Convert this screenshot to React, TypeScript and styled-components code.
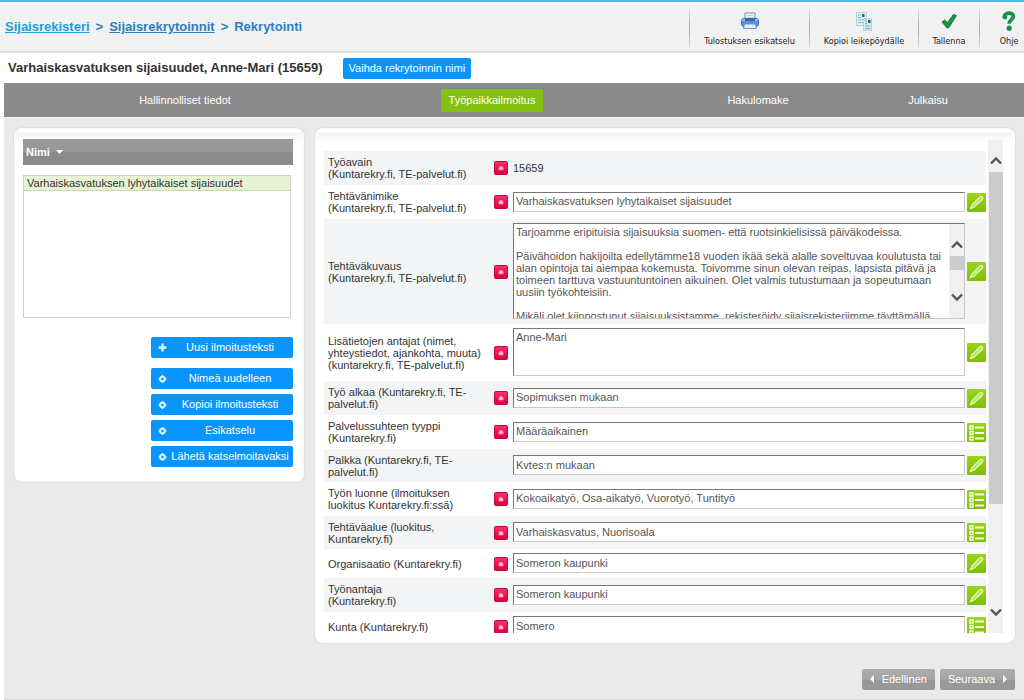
import React from "react";
import styled, { createGlobalStyle, css } from "styled-components";

const GlobalStyle = createGlobalStyle`
  *, *::before, *::after { box-sizing: border-box; }
  body {
    margin: 0;
    background: #fff;
    color: #333;
    font: 11px/12px "Liberation Sans", Arial, sans-serif;
  }
  button, input, textarea { font: inherit; color: inherit; margin: 0; }
  svg { flex-shrink: 0; }
`;

const Page = styled.div`
  border-top: 2px solid #4bb8ec;
  padding-top: 2px;
  overflow: hidden;
`;

const Header = styled.header`
  display: flex;
  justify-content: space-between;
  height: 49px;
  background: #f1f1f1;
  border-bottom: 2px solid #dedede;
`;

const Breadcrumb = styled.nav`
  display: flex;
  align-items: center;
  gap: 6px;
  padding: 0 0 1px 5px;
  font-size: 13px;
  line-height: 16px;
  font-weight: bold;
  color: #2b7fc1;
  white-space: nowrap;
`;

const Crumb = styled.a<{ $bright?: boolean }>`
  color: ${(p) => (p.$bright ? "#1c9fe0" : "#2b7fc1")};
`;

const Toolbar = styled.div`
  display: flex;
  margin-right: -14px;
  padding-top: 4px;
`;

const ToolButton = styled.button<{ $width: number }>`
  display: flex;
  flex-direction: column;
  align-items: center;
  gap: 4px;
  width: ${(p) => p.$width}px;
  height: 40px;
  padding: 3px 0 0;
  border: 0;
  border-left: 1px solid;
  border-image: linear-gradient(#e6e6e6, #a8a8a8 50%, #e0e0e0) 1;
  background: none;
  color: #222;
  font: 9px/12px "DejaVu Sans Condensed", "DejaVu Sans", sans-serif;
  white-space: nowrap;
`;

const TitleBar = styled.div`
  display: flex;
  align-items: center;
  gap: 20px;
  height: 30px;
  padding-left: 8px;
`;

const Title = styled.h1`
  margin: 0;
  font-size: 13px;
  line-height: 16px;
  white-space: nowrap;
`;

const BlueButton = styled.button`
  height: 21px;
  padding: 0 6px 1px;
  border: 0;
  border-radius: 2px;
  background: #0a95fc;
  color: #fff;
  white-space: nowrap;
`;

const Tabs = styled.nav`
  display: grid;
  grid-template-columns: 362fr 252fr 280fr 60fr 66fr;
  align-items: center;
  justify-items: center;
  height: 34px;
  margin-left: 4px;
  background: #8a8a8a;
`;

const Tab = styled.a<{ $active?: boolean }>`
  padding: 5px 8px 6px;
  border-radius: 1px;
  color: #fff;
  text-decoration: none;
  white-space: nowrap;
  ${(p) => p.$active && css`background: #85c111;`}
`;

const Main = styled.main`
  margin-left: 4px;
  padding: 10px 9px 9px 10px;
  border-top: 1px solid #f4f4f4;
  border-bottom: 1px solid #dcdcdc;
  background: #eaeaea;
`;

const Columns = styled.div`
  display: flex;
  align-items: flex-start;
  gap: 11px;
`;

const Panel = styled.section`
  padding: 10px 10px 10px 8px;
  border: 1px solid #fbfbfb;
  border-radius: 8px;
  background: linear-gradient(#fff 0, #fff 3px, #f5f5f5 4px, #fff 14px);
  box-shadow: 0 0 1px 1px #dfdfdf;
`;

const SidePanel = styled(Panel)`
  flex: 0 0 290px;
  padding-bottom: 14px;
`;

const FormPanel = styled(Panel)`
  flex: 1;
  min-width: 0;
  display: flex;
  gap: 2px;
  padding: 11px 11px 9px 8px;
`;

const ListHeader = styled.button`
  display: flex;
  align-items: center;
  gap: 6px;
  width: 100%;
  height: 26px;
  padding: 0 3px;
  border: 0;
  background: linear-gradient(#9b9b9b 0, #979797 50%, #8b8b8b 51%, #898989 100%);
  color: #fff;
  font-weight: bold;
`;

const NameList = styled.ul`
  height: 143px;
  margin: 10px 2px 19px 0;
  padding: 0;
  border: 1px solid #ccd0d0;
  list-style: none;
`;

const NameItem = styled.li`
  padding: 1px 3px;
  border-bottom: 1px solid #c9d8b4;
  background: #e7f2d2;
`;

const Actions = styled.div`
  display: flex;
  flex-direction: column;
  gap: 5px;
  width: 142px;
  margin-left: auto;
`;

const ActionButton = styled(BlueButton)<{ $first?: boolean }>`
  display: flex;
  align-items: center;
  gap: 3px;
  padding: 0 3px 0 7px;
  margin-bottom: ${(p) => (p.$first ? 5 : 0)}px;
`;

const ActionText = styled.span`
  flex: 1;
  padding-bottom: 1px;
  text-align: center;
`;

const FormRows = styled.form`
  flex: 1;
  min-width: 0;
  height: 493px;
  padding-top: 11px;
  overflow: hidden;
`;

const Label = styled.label<{ $compact?: boolean }>`
  padding: 5px 0 ${(p) => (p.$compact ? 4 : 5)}px 4px;
`;

const Row = styled.div`
  display: grid;
  grid-template-columns: 160px 27px 1fr 19px;
  align-items: center;
  column-gap: 1px;
  &:nth-child(odd) { background: #f3f4f6; }
`;

const Mark = styled.span`
  display: flex;
  padding-left: 9px;
`;

const fieldBox = css`
  width: 100%;
  border: 1px solid #c8c8c8;
  border-top-color: #777;
  border-left-color: #777;
  background: #fff;
  color: #555;
`;

const Field = styled.div`
  display: flex;
  padding: 4px 1px 5px 0;
`;

const TextInput = styled.input`
  ${fieldBox}
  height: 20px;
  padding: 0 2px 1px;
  outline: 0;
`;

const AreaBox = styled.div<{ $height: number }>`
  ${fieldBox}
  display: flex;
  height: ${(p) => p.$height}px;
`;

const Area = styled.textarea`
  flex: 1;
  height: 100%;
  padding: 2px 2px 0;
  border: 0;
  outline: 0;
  resize: none;
  overflow: hidden;
  background: none;
  line-height: 12px;
`;

const EditButton = styled.button`
  display: flex;
  align-items: center;
  justify-content: center;
  width: 19px;
  height: 19px;
  padding: 0;
  border: 0;
  border-radius: 1px;
  background: linear-gradient(#98d615, #7fbe08);
`;

const ScrollTrack = styled.div<{ $top: number; $bottom: number }>`
  display: flex;
  flex-direction: column;
  align-items: center;
  flex: 0 0 15px;
  padding: ${(p) => p.$top}px 0 ${(p) => p.$bottom}px;
  background: #f0f0f0;
`;

const ScrollThumb = styled.div<{ $height: number }>`
  width: 14px;
  height: ${(p) => p.$height}px;
  margin: 7px 0 auto;
  background: #cbcbcd;
`;

const Pager = styled.div`
  display: flex;
  justify-content: flex-end;
  gap: 5px;
  margin-top: 26px;
`;

const PagerButton = styled.button`
  display: flex;
  align-items: center;
  gap: 8px;
  height: 21px;
  padding: 0 8px 1px;
  border: 0;
  border-radius: 2px;
  background: linear-gradient(#acacac, #a4a4a4 50%, #979797 51%, #999);
  color: #fff;
`;

const Arrow = ({ down }: { down?: boolean }) => (
  <svg width="12" height="9" viewBox="0 0 12 9" aria-hidden="true">
    <path d={down ? "M1 1.5 6 6.5 11 1.5" : "M1 7.5 6 2.5 11 7.5"} fill="none" stroke="#555" strokeWidth="2.4" />
  </svg>
);

const RequiredIcon = () => (
  <svg width="14" height="14" viewBox="0 0 14 14" role="img" aria-label="Pakollinen">
    <defs>
      <linearGradient id="req" x1="0" y1="0" x2="0" y2="1">
        <stop offset="0" stopColor="#f8336b" />
        <stop offset="0.5" stopColor="#ec1650" />
        <stop offset="1" stopColor="#d8023c" />
      </linearGradient>
    </defs>
    <rect x="0.5" y="0.5" width="13" height="13" rx="1" fill="url(#req)" stroke="#c4063a" />
    <path d="M5 8.8V6.6L7 5.2 9 6.600V8.800Z" fill="#ff9db8" stroke="#ffb4c8" strokeWidth="0.8" />
    <circle cx="7" cy="7.400" r="1" fill="#ffe3eb" />
  </svg>
);

const PencilIcon = () => (
  <svg width="17" height="17" viewBox="0 0 17 17" aria-hidden="true">
    <path d="M2.5 14.5 4 10.8 11.6 3.2Q13.2 1.8 14.3 2.9T13.9 5.5L6.2 13.1Z" fill="#a9dc45" stroke="#effbd0" strokeWidth="1.1" />
    <path d="M5.200 12 12.600 4.600" stroke="#e3f5b4" strokeWidth="0.8" />
  </svg>
);

const ListIcon = () => (
  <svg width="17" height="17" viewBox="0 0 17 17" aria-hidden="true" fill="none" stroke="#f7fde6">
    <path d="M2 2h3v3h-3zM2 7.500h3v3h-3zM2 13h3v3h-3z" strokeWidth="1.4" />
    <path d="M7 3.500h9M7 9h9M7 14.500h9" strokeWidth="2" />
  </svg>
);

const PlusIcon = () => (
  <svg width="9" height="9" viewBox="0 0 9 9" aria-hidden="true">
    <path d="M4.5 0.5v8M0.5 4.5h8" stroke="#d5f4ff" strokeWidth="2.4" />
  </svg>
);

const GearIcon = () => (
  <svg width="9" height="9" viewBox="0 0 9 9" aria-hidden="true">
    <circle cx="4.5" cy="5" r="2.3" fill="none" stroke="#d5f4ff" strokeWidth="2" />
    <path d="M4.5 1v1.5M4.5 7.5v1.5M0.5 5h1.5M7 5h1.5" stroke="#d5f4ff" strokeWidth="1.4" />
  </svg>
);

const PrinterIcon = () => (
  <svg width="20" height="20" viewBox="0 0 20 20" aria-hidden="true">
    <path d="M5 2h10v7H5z" fill="#eef5ff" stroke="#6f8fc4" />
    <path d="M7 4.5h6M7 6.5h6" stroke="#b5c8e6" />
    <rect x="1.5" y="7.5" width="17" height="8" rx="2.5" fill="#5f8fdc" stroke="#3f6cb8" />
    <path d="M2.5 9h15" stroke="#a9c8f5" strokeWidth="1.6" />
    <path d="M5 9h10" stroke="#2f4f8c" strokeWidth="1.6" />
    <path d="M4.5 13h11l1 4.5h-13z" fill="#e4eefc" stroke="#6d90cc" />
  </svg>
);

const CopyIcon = () => (
  <svg width="20" height="20" viewBox="0 0 20 20" aria-hidden="true">
    <rect x="2.5" y="1.5" width="10" height="13" fill="#e2f1f5" stroke="#b4d2dd" />
    <path d="M4 4h3M4 6.5h3M4 9h6M4 11.5h6" stroke="#8fbccd" />
    <rect x="8" y="3" width="2.5" height="3" fill="#2d6576" />
    <rect x="9.5" y="7.5" width="8" height="12" fill="#d3e9f0" stroke="#b4d2dd" />
    <path d="M11 10h2M11 12.500h2M11 15h5M11 17.500h5" stroke="#7fb0c4" />
    <rect x="14" y="9" width="2.500" height="3" fill="#2d6576" />
  </svg>
);

const CheckIcon = () => (
  <svg width="20" height="20" viewBox="0 0 20 20" aria-hidden="true">
    <path d="M3 11 5.500 9 8.500 11.500 14.500 3.500 17.500 4.500 10 16.500 8 17Z" fill="#159447" stroke="#0f8240" strokeLinejoin="round" />
  </svg>
);

const HelpIcon = () => (
  <svg width="20" height="20" viewBox="0 0 20 20" aria-hidden="true">
    <path d="M5.500 7C4.500 0.500 14.800 0.800 14.300 5.500 14.100 8.800 10.200 8.700 10.100 12.800" fill="none" stroke="#16934b" strokeWidth="3.800" />
    <circle cx="6" cy="6" r="2.400" fill="#16934b" />
    <circle cx="10.200" cy="17.200" r="2.600" fill="#16934b" />
  </svg>
);

const Triangle = ({ dir }: { dir: "left" | "right" | "down" }) =>
  dir === "down" ? (
    <svg width="7" height="4" viewBox="0 0 7 4" aria-hidden="true"><path d="M0 0h7L3.500 4Z" fill="#fff" /></svg>
  ) : (
    <svg width="4" height="8" viewBox="0 0 4 8" aria-hidden="true">
      <path d={dir === "left" ? "M4 0v8L0 4Z" : "M0 0v8L4 4Z"} fill="#fff" />
    </svg>
  );

const description = `Tarjoamme eripituisia sijaisuuksia suomen- että ruotsinkielisissä päiväkodeissa.

Päivähoidon hakijoilta edellytämme18 vuoden ikää sekä alalle soveltuvaa koulutusta tai alan opintoja tai aiempaa kokemusta. Toivomme sinun olevan reipas, lapsista pitävä ja toimeen tarttuva vastuuntuntoinen aikuinen. Olet valmis tutustumaan ja sopeutumaan uusiin työkohteisiin.

Mikäli olet kiinnostunut sijaisuuksistamme, rekisteröidy sijaisrekisteriimme täyttämällä`;

type RowData = {
  label: string[];
  value: string;
  required?: boolean;
  compact?: boolean;
  kind: "plain" | "input" | "area" | "scroll";
  action?: "edit" | "list";
};

const rows: RowData[] = [
  { label: ["Työavain", "(Kuntarekry.fi, TE-palvelut.fi)"], value: "15659", required: true, kind: "plain" },
  { label: ["Tehtävänimike", "(Kuntarekry.fi, TE-palvelut.fi)"], value: "Varhaiskasvatuksen lyhytaikaiset sijaisuudet", required: true, kind: "input", action: "edit" },
  { label: ["Tehtäväkuvaus", "(Kuntarekry.fi, TE-palvelut.fi)"], value: description, required: true, kind: "scroll", action: "edit" },
  { label: ["Lisätietojen antajat (nimet,", "yhteystiedot, ajankohta, muuta)", "(kuntarekry.fi, TE-palvelut.fi)"], value: "Anne-Mari", required: true, kind: "area", action: "edit" },
  { label: ["Työ alkaa (Kuntarekry.fi, TE-", "palvelut.fi)"], value: "Sopimuksen mukaan", required: true, kind: "input", action: "edit" },
  { label: ["Palvelussuhteen tyyppi", "(Kuntarekry.fi)"], value: "Määräaikainen", required: true, kind: "input", action: "list" },
  { label: ["Palkka (Kuntarekry.fi, TE-", "palvelut.fi)"], value: "Kvtes:n mukaan", compact: true, kind: "input", action: "edit" },
  { label: ["Työn luonne (ilmoituksen", "luokitus Kuntarekry.fi:ssä)"], value: "Kokoaikatyö, Osa-aikatyö, Vuorotyö, Tuntityö", required: true, kind: "input", action: "list" },
  { label: ["Tehtäväalue (luokitus,", "Kuntarekry.fi)"], value: "Varhaiskasvatus, Nuorisoala", required: true, compact: true, kind: "input", action: "list" },
  { label: ["Organisaatio (Kuntarekry.fi)"], value: "Someron kaupunki", required: true, kind: "input", action: "edit" },
  { label: ["Työnantaja", "(Kuntarekry.fi)"], value: "Someron kaupunki", required: true, kind: "input", action: "edit" },
  { label: ["Kunta (Kuntarekry.fi)"], value: "Somero", required: true, kind: "input", action: "list" },
];

const FormRow = ({ row, id }: { row: RowData; id: string }) => (
  <Row>
    <Label
      as={row.kind === "plain" ? "span" : "label"}
      htmlFor={row.kind === "plain" ? undefined : id}
      $compact={row.compact}
    >
      {row.label.map((line, i) => (
        <React.Fragment key={line}>{i > 0 && <br />}{line}</React.Fragment>
      ))}
    </Label>
    <Mark>{row.required && <RequiredIcon />}</Mark>
    <Field>
      {row.kind === "plain" && <span>{row.value}</span>}
      {row.kind === "input" && <TextInput id={id} defaultValue={row.value} />}
      {row.kind === "area" && <AreaBox $height={48}><Area id={id} defaultValue={row.value} /></AreaBox>}
      {row.kind === "scroll" && (
        <AreaBox $height={96}>
          <Area id={id} defaultValue={row.value} />
          <ScrollTrack $top={16} $bottom={16}>
            <Arrow />
            <ScrollThumb $height={14} />
            <Arrow down />
          </ScrollTrack>
        </AreaBox>
      )}
    </Field>
    {row.action && (
      <EditButton type="button" aria-label={row.action === "edit" ? "Muokkaa" : "Valitse"}>
        {row.action === "edit" ? <PencilIcon /> : <ListIcon />}
      </EditButton>
    )}
  </Row>
);

const actions = ["Nimeä uudelleen", "Kopioi ilmoitusteksti", "Esikatselu", "Lähetä katselmoitavaksi"];

export default function App() {
  return (
    <Page>
      <GlobalStyle />
      <Header>
        <Breadcrumb>
          <Crumb href="#" $bright>Sijaisrekisteri</Crumb>
          <span>&gt;</span>
          <Crumb href="#">Sijaisrekrytoinnit</Crumb>
          <span>&gt;</span>
          <span>Rekrytointi</span>
        </Breadcrumb>
        <Toolbar>
          <ToolButton $width={120}><PrinterIcon />Tulostuksen esikatselu</ToolButton>
          <ToolButton $width={109}><CopyIcon />Kopioi leikepöydälle</ToolButton>
          <ToolButton $width={61}><CheckIcon />Tallenna</ToolButton>
          <ToolButton $width={59}><HelpIcon />Ohje</ToolButton>
        </Toolbar>
      </Header>
      <TitleBar>
        <Title>Varhaiskasvatuksen sijaisuudet, Anne-Mari (15659)</Title>
        <BlueButton>Vaihda rekrytoinnin nimi</BlueButton>
      </TitleBar>
      <Tabs>
        <Tab href="#">Hallinnolliset tiedot</Tab>
        <Tab href="#" $active>Työpaikkailmoitus</Tab>
        <Tab href="#">Hakulomake</Tab>
        <Tab href="#">Julkaisu</Tab>
      </Tabs>
      <Main>
        <Columns>
          <SidePanel>
            <ListHeader>Nimi <Triangle dir="down" /></ListHeader>
            <NameList>
              <NameItem>Varhaiskasvatuksen lyhytaikaiset sijaisuudet</NameItem>
            </NameList>
            <Actions>
              <ActionButton $first><PlusIcon /><ActionText>Uusi ilmoitusteksti</ActionText></ActionButton>
              {actions.map((text) => (
                <ActionButton key={text}><GearIcon /><ActionText>{text}</ActionText></ActionButton>
              ))}
            </Actions>
          </SidePanel>
          <FormPanel>
            <FormRows>
              {rows.map((row, i) => <FormRow key={i} row={row} id={`field-${i}`} />)}
            </FormRows>
            <ScrollTrack $top={16} $bottom={16}>
              <Arrow />
              <ScrollThumb $height={332} />
              <Arrow down />
            </ScrollTrack>
          </FormPanel>
        </Columns>
        <Pager>
          <PagerButton><Triangle dir="left" />Edellinen</PagerButton>
          <PagerButton>Seuraava<Triangle dir="right" /></PagerButton>
        </Pager>
      </Main>
    </Page>
  );
}
